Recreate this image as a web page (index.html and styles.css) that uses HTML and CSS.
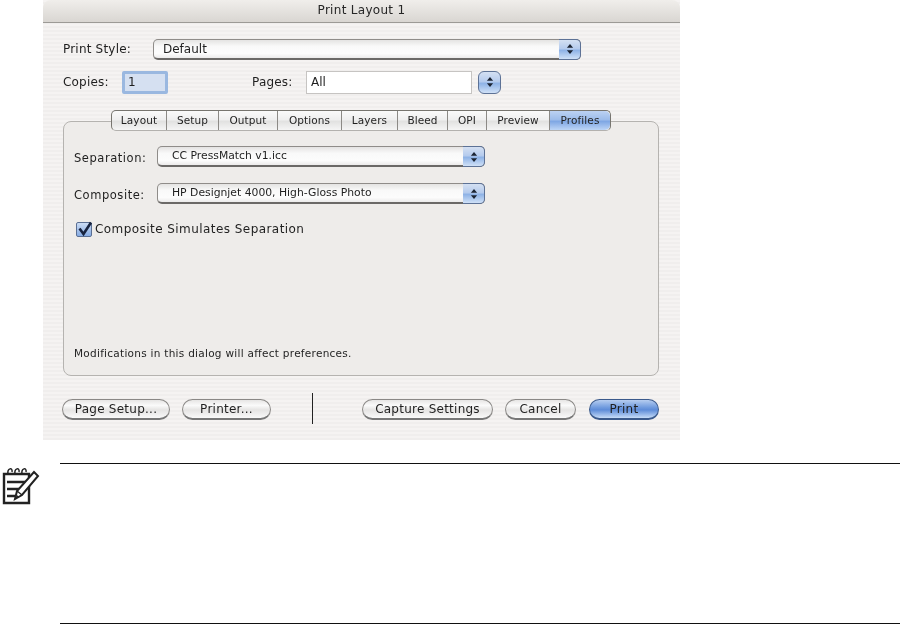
FILE: index.html
```html
<!DOCTYPE html>
<html lang="en">
<head>
<meta charset="utf-8">
<title>Print Layout 1</title>
<link rel="stylesheet" href="styles.css">
</head>
<body>
<main class="dialog">
  <header class="titlebar">Print Layout 1</header>
  <div class="body">
    <div class="row style-row">
      <span class="label style-label">Print Style:</span>
      <div class="select big"><span>Default</span><i class="step"><svg viewBox="0 0 9 13" width="8" height="12"><path d="M4.500 1 8 5H1zM4.500 12 1 8h7z"/></svg></i></div>
    </div>
    <div class="row copies-row">
      <span class="label copies-label">Copies:</span>
      <div class="field focus">1</div>
      <span class="label pages-label">Pages:</span>
      <div class="field pages">All</div>
      <i class="step solo"><svg viewBox="0 0 9 13" width="8" height="12"><path d="M4.500 1 8 5H1zM4.500 12 1 8h7z"/></svg></i>
    </div>
    <section class="group">
      <nav class="tabs">
        <span class="tab w1">Layout</span><span class="tab w2">Setup</span><span class="tab w3">Output</span><span class="tab w4">Options</span><span class="tab w5">Layers</span><span class="tab w6">Bleed</span><span class="tab w7">OPI</span><span class="tab w8">Preview</span><span class="tab active w9">Profiles</span>
      </nav>
      <div class="panel">
        <div class="row prof first">
          <span class="label prof-label">Separation:</span>
          <div class="select small"><span>CC PressMatch v1.icc</span><i class="step"><svg viewBox="0 0 9 13" width="8" height="12"><path d="M4.500 1 8 5H1zM4.500 12 1 8h7z"/></svg></i></div>
        </div>
        <div class="row prof second">
          <span class="label prof-label">Composite:</span>
          <div class="select small"><span>HP Designjet 4000, High-Gloss Photo</span><i class="step"><svg viewBox="0 0 9 13" width="8" height="12"><path d="M4.500 1 8 5H1zM4.500 12 1 8h7z"/></svg></i></div>
        </div>
        <div class="row check-row">
          <span class="check"><svg viewBox="0 0 17 17" width="17" height="17"><path d="M3.500 7.500 7.500 13 15 1.500" fill="none" stroke="#17233f" stroke-width="2.600"/></svg></span>
          <span class="label check-label">Composite Simulates Separation</span>
        </div>
        <p class="hint">Modifications in this dialog will affect preferences.</p>
      </div>
    </section>
    <div class="row buttons">
      <span class="btn b1">Page Setup...</span>
      <span class="btn b2">Printer...</span>
      <span class="divider"></span>
      <span class="btn b3">Capture Settings</span>
      <span class="btn b4">Cancel</span>
      <span class="btn b5 default">Print</span>
    </div>
  </div>
</main>
<aside class="note">
  <svg class="note-icon" viewBox="0 0 38 41" width="38" height="41">
    <path d="M2 9H27V38H2Z" fill="none" stroke="#222" stroke-width="2.400"/>
    <path d="M6 9C5 3 11 2 10 7M13 9C12 3 18 2 17 7M20 9C19 3 25 2 24 7" fill="none" stroke="#222" stroke-width="1.500"/>
    <path d="M5 17H23M5 24H18M5 31H13" stroke="#222" stroke-width="2.400"/>
    <path d="M32 7 36 11 20 30 13 34 15 26Z" fill="#fff" stroke="#222" stroke-width="2"/>
    <path d="M15 26 20 30" stroke="#222" stroke-width="1.500"/>
    <path d="M13 34 15 30 17 32Z" fill="#222"/>
  </svg>
  <div class="note-body"></div>
</aside>
</body>
</html>
```
FILE: styles.css
```css
* { box-sizing: border-box; }
html, body { margin: 0; height: 624px; overflow: hidden; background: #fff; }
body {
  position: relative;
  font-family: "DejaVu Sans", sans-serif;
  color: #1f1f1f;
}
.dialog {
  width: 637px;
  height: 440px;
  margin-left: 43px;
  background: repeating-linear-gradient(#f5f3f2 0 2px, #f0eeed 2px 4px);
  display: flex;
  flex-direction: column;
  filter: blur(.3px);
}
.titlebar {
  height: 23px;
  border-radius: 8px 8px 0 0;
  background: linear-gradient(#f0eeeb, #d9d6d2);
  border-bottom: 1px solid #9c9a96;
  text-align: center;
  font-size: 12px;
  line-height: 20px;
  letter-spacing: .3px;
  color: #262626;
}
.body { padding: 0 21px 0 20px; flex: 1; }
.row { display: flex; align-items: center; }
.label { font-size: 12px; white-space: nowrap; letter-spacing: .2px; }
.style-row { margin-top: 16px; height: 20px; }
.style-label { width: 90px; }
.select {
  position: relative;
  display: flex;
  align-items: center;
  border: 1px solid #8f8c89;
  border-bottom: 2px solid #6b6967;
  border-radius: 5px;
  background: linear-gradient(#e4e3e2, #f9f9f9 35%, #fcfcfc 75%, #ecebeb);
}
.select span { padding-left: 9px; }
.big { width: 428px; height: 21px; font-size: 12px; }
.small { width: 328px; height: 21px; font-size: 10.800px; margin-top: -2px; }
.small span { padding-left: 14px; padding-bottom: 2px; }
.step {
  display: flex;
  align-items: center;
  justify-content: center;
  background: linear-gradient(#d4e0f2, #b5cbed 45%, #8fb3e6 55%, #d0e1f7);
  border-radius: 0 5px 5px 0;
  border: 1px solid #5d7296;
}
.step path { fill: #1c2433; }
.select .step { position: absolute; right: -1px; top: -1px; bottom: -2px; width: 22px; border-left: 0; }
.step.solo { width: 23px; height: 23px; border-radius: 6px; margin-left: 6px; }
.copies-row { margin-top: 11px; height: 24px; }
.copies-label { width: 59px; }
.field {
  height: 23px;
  background: #fff;
  border: 1px solid #c6c4c2;
  font-size: 12px;
  line-height: 21px;
  padding-left: 4px;
}
.focus {
  width: 46px;
  background: #d5e0f1;
  border: 3px solid #9ab8e0;
  line-height: 17px;
  border-radius: 2px;
  padding-left: 3px;
}
.pages-label { margin-left: 84px; width: 54px; }
.pages { width: 166px; }
.group { position: relative; margin-top: 16px; height: 266px; }
.tabs {
  position: absolute;
  left: 48px;
  top: 0;
  display: flex;
  height: 21px;
  background: linear-gradient(#fafafa, #efefef 45%, #e2e2e1 55%, #f5f5f5);
  border: 1px solid #77756f;
  border-bottom-color: #b3b1ae;
  border-radius: 5px;
  z-index: 1;
}
.tab {
  display: block;
  font-size: 10.500px;
  line-height: 18px;
  text-align: center;
  border-right: 1px solid #8c8a86;
  letter-spacing: .1px;
}
.tab.active {
  background: linear-gradient(#bcd2f2, #9dbcea 45%, #7fa7e4 55%, #bdd5f6);
  border-right: 0;
  border-radius: 0 5px 5px 0;
}
.w1 { width: 55px; } .w2 { width: 52px; } .w3 { width: 59px; } .w4 { width: 64px; }
.w5 { width: 56px; } .w6 { width: 50px; } .w7 { width: 39px; } .w8 { width: 63px; } .w9 { width: 60px; }
.panel {
  position: absolute;
  left: 0;
  right: 0;
  top: 11px;
  height: 255px;
  background: #eeecea;
  border: 1px solid #b5b3b0;
  border-radius: 8px;
  padding: 0 10px;
}
.prof { height: 21px; }
.first { margin-top: 25px; }
.second { margin-top: 16px; }
.prof-label { width: 83px; font-size: 11.500px; letter-spacing: .55px; }
.check-row { margin-top: 16px; margin-left: 2px; height: 16px; gap: 3px; }
.check-label { letter-spacing: .44px; }
.check {
  width: 16px;
  height: 15px;
  border: 1px solid #5a6f94;
  border-radius: 2px;
  background: linear-gradient(#cbdcf4, #86abe3);
}
.check svg { display: block; margin: -2px 0 0 -1px; }
.hint {
  margin: 109px 0 0;
  font-size: 10.500px;
  letter-spacing: .27px;
  line-height: 14px;
}
.buttons { margin-top: 23px; height: 21px; margin-left: -1px; }
.btn {
  height: 21px;
  border: 1px solid #8a8886;
  border-bottom: 2px solid #777;
  border-radius: 11px;
  background: linear-gradient(#e6e5e4, #fafafa 30%, #e5e4e3 55%, #f9f9f9);
  font-size: 12px;
  line-height: 18px;
  text-align: center;
  letter-spacing: .25px;
  white-space: nowrap;
}
.b1 { width: 108px; }
.b2 { width: 89px; margin-left: 12px; }
.divider { width: 1px; height: 31px; background: #222; margin: -2px 0 0 41px; }
.b3 { width: 131px; margin-left: 49px; }
.b4 { width: 71px; margin-left: 12px; }
.b5 { width: 70px; margin-left: 13px; }
.default {
  border-color: #3b5a8c;
  background: linear-gradient(#b6cdf0, #6f9ade 42%, #5e8cd8 55%, #c6dcf8);
}
.note {
  position: relative;
  height: 161px;
  margin-top: 23px;
  margin-left: 60px;
  border-top: 1px solid #111;
  border-bottom: 1px solid #111;
}
.note-icon { position: absolute; left: -58px; top: 1px; }
```
